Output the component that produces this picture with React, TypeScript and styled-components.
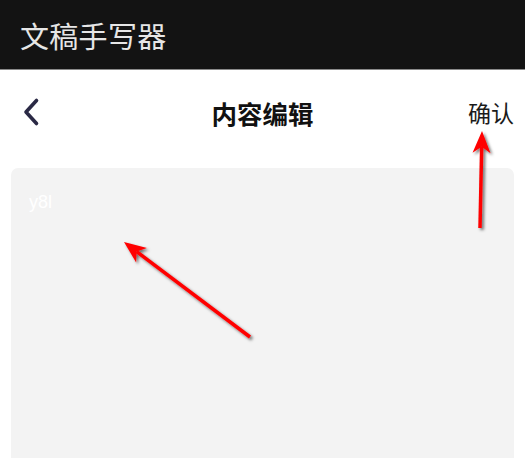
import styled, { createGlobalStyle } from 'styled-components';

const GlobalStyle = createGlobalStyle`
  html, body {
    margin: 0;
    padding: 0;
    background: #ffffff;
    overflow: hidden;
  }
  body {
    font-family: "Noto Sans CJK SC", "Noto Sans", sans-serif;
  }
`;

const Page = styled.div`
  position: relative;
  width: 525px;
  height: 458px;
  display: flex;
  flex-direction: column;
  background: #ffffff;
  overflow: hidden;
`;

const AppBar = styled.header`
  height: 69px;
  flex-shrink: 0;
  display: flex;
  align-items: center;
  padding-left: 20px;
  background: #131313;
  border-bottom: 1px solid #8a8a8a;
`;

const AppTitle = styled.h1`
  margin: 0;
  font-size: 29px;
  font-weight: 400;
  color: #e6e6e6;
  letter-spacing: 0.3px;
`;

const NavBar = styled.nav`
  height: 84px;
  flex-shrink: 0;
  display: grid;
  grid-template-columns: 80px 1fr 80px;
  align-items: center;
`;

const BackButton = styled.button`
  justify-self: start;
  margin-left: 20px;
  padding: 0;
  border: none;
  background: none;
  display: flex;
`;

const NavTitle = styled.div`
  justify-self: center;
  font-size: 25.5px;
  font-weight: 700;
  color: #111111;
`;

const Confirm = styled.button`
  justify-self: end;
  margin-right: 11px;
  padding: 0;
  border: none;
  background: none;
  font-family: inherit;
  font-size: 23px;
  color: #1a1a1a;
`;

const Editor = styled.div`
  flex: 1;
  margin: 14px 11px 0;
  padding: 21px 18px;
  background: #f3f3f3;
  border-radius: 7px 7px 0 0;
`;

const Placeholder = styled.span`
  font-family: "Liberation Sans", Arial, sans-serif;
  font-size: 18px;
  color: #ffffff;
`;

const Annotations = styled.svg`
  position: absolute;
  inset: 0;
  pointer-events: none;
`;

function Arrow({ x1, y1, x2, y2 }: { x1: number; y1: number; x2: number; y2: number }) {
  const dx = x2 - x1;
  const dy = y2 - y1;
  const len = Math.hypot(dx, dy);
  const ux = dx / len;
  const uy = dy / len;
  const head = 22;
  const half = 9;
  const bx = x2 - ux * head;
  const by = y2 - uy * head;
  const nx = -uy;
  const ny = ux;
  const notchX = x2 - ux * head * 0.72;
  const notchY = y2 - uy * head * 0.72;
  return (
    <g filter="url(#shadow)">
      <line x1={x1} y1={y1} x2={notchX} y2={notchY} stroke="#ff0000" strokeWidth={3.5} />
      <polygon
        points={`${x2},${y2} ${bx + nx * half},${by + ny * half} ${notchX},${notchY} ${bx - nx * half},${by - ny * half}`}
        fill="#ff0000"
      />
    </g>
  );
}

export default function App() {
  return (
    <Page>
      <GlobalStyle />
      <AppBar>
        <AppTitle>文稿手写器</AppTitle>
      </AppBar>
      <NavBar>
        <BackButton aria-label="返回">
          <svg width="22" height="30" viewBox="0 0 22 30">
            <path d="M16.5 3.5 L6 15 L16.5 26.5" fill="none" stroke="#2a2945" strokeWidth="3.6" strokeLinecap="round" strokeLinejoin="round" />
          </svg>
        </BackButton>
        <NavTitle>内容编辑</NavTitle>
        <Confirm>确认</Confirm>
      </NavBar>
      <Editor>
        <Placeholder>y8l</Placeholder>
      </Editor>
      <Annotations width="525" height="458">
        <defs>
          <filter id="shadow" x="-20%" y="-20%" width="140%" height="140%">
            <feDropShadow dx="2" dy="2" stdDeviation="1.6" floodColor="#000" floodOpacity="0.55" />
          </filter>
        </defs>
        <Arrow x1={250} y1={337} x2={124} y2={242} />
        <Arrow x1={480} y1={228} x2={482} y2={131} />
      </Annotations>
    </Page>
  );
}
